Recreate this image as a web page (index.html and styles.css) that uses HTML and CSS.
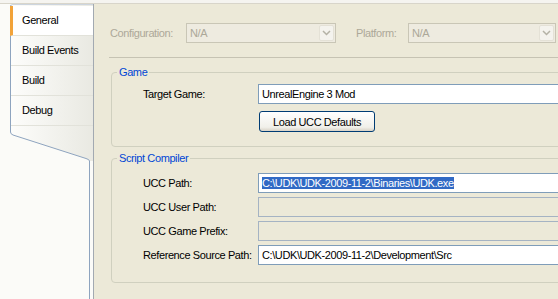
FILE: index.html
```html
<!DOCTYPE html>
<html lang="en">
<head>
    <meta charset="UTF-8">
    <title>Project Properties - General</title>
    <link rel="stylesheet" href="styles.css">
</head>
<body>
    <div class="topbar"></div>

    <div class="main">
        <nav class="sidebar">
            <ul class="tabs">
                <li class="tab active">General</li>
                <li class="tab">Build Events</li>
                <li class="tab">Build</li>
                <li class="tab">Debug</li>
            </ul>
            <svg class="tabs-tail" width="93" height="32" viewBox="0 0 93 32">
                <defs>
                    <linearGradient id="tabFade" gradientUnits="userSpaceOnUse" x1="10" y1="0" x2="93" y2="0">
                        <stop offset="0" stop-color="#fdfdfb"/>
                        <stop offset="1" stop-color="#e9e9e2"/>
                    </linearGradient>
                </defs>
                <path d="M10 0 H93 V32 H90 Q89.5 30.5 86 29.5 L13 6 Q10.5 5 10.5 3 V0 Z" fill="url(#tabFade)"/>
                <path d="M10.5 0 V3 Q10.5 5 13 6 L86 29.5 Q89.5 30.5 89.5 32" fill="none" stroke="#8ea4bf" stroke-width="1"/>
            </svg>
            <div class="tabs-line"></div>
        </nav>

        <main class="panel">
            <div class="config-row">
                <span class="dim cfg-label">Configuration:</span>
                <div class="combo">
                    <span class="combo-text">N/A</span>
                    <span class="combo-drop">
                        <svg width="9" height="6" viewBox="0 0 9 6"><path d="M1 1 L4.5 4.5 L8 1" fill="none" stroke="#b4b2a6" stroke-width="1.5"/></svg>
                    </span>
                </div>
                <span class="dim plat-label">Platform:</span>
                <div class="combo combo-plat">
                    <span class="combo-text">N/A</span>
                    <span class="combo-drop">
                        <svg width="9" height="6" viewBox="0 0 9 6"><path d="M1 1 L4.5 4.5 L8 1" fill="none" stroke="#b4b2a6" stroke-width="1.5"/></svg>
                    </span>
                </div>
            </div>

            <hr class="sep">

            <fieldset class="group group-game">
                <legend>Game</legend>
                <div class="group-body">
                    <div class="field-row">
                        <span class="field-label">Target Game:</span>
                        <div class="textbox">UnrealEngine 3 Mod</div>
                    </div>
                    <div class="field-row">
                        <span></span>
                        <button class="btn">Load UCC Defaults</button>
                    </div>
                </div>
            </fieldset>

            <fieldset class="group group-compiler">
                <legend>Script Compiler</legend>
                <div class="group-body compiler-body">
                    <div class="field-row">
                        <span class="field-label">UCC Path:</span>
                        <div class="textbox"><span class="selected">C:\UDK\UDK-2009-11-2\Binaries\UDK.exe</span></div>
                    </div>
                    <div class="field-row">
                        <span class="field-label">UCC User Path:</span>
                        <div class="textbox disabled"></div>
                    </div>
                    <div class="field-row">
                        <span class="field-label">UCC Game Prefix:</span>
                        <div class="textbox disabled"></div>
                    </div>
                    <div class="field-row">
                        <span class="field-label">Reference Source Path:</span>
                        <div class="textbox">C:\UDK\UDK-2009-11-2\Development\Src</div>
                    </div>
                </div>
            </fieldset>
        </main>
    </div>
</body>
</html>
```

FILE: styles.css
```css
html, body {
    margin: 0;
    padding: 0;
}

body {
    width: 558px;
    height: 299px;
    overflow: hidden;
    display: flex;
    flex-direction: column;
    background-color: #fbfbf8;
    font-family: "Liberation Sans", Arial, sans-serif;
    font-size: 11px;
    letter-spacing: -0.4px;
    color: #000;
}

.topbar {
    height: 3px;
    background: #f5f4f0;
    border-bottom: 1px solid #d8d5ca;
    flex-shrink: 0;
}

.main {
    flex: 1;
    display: flex;
    min-height: 0;
}

/* left tab list */
.sidebar {
    width: 93px;
    flex-shrink: 0;
    display: flex;
    flex-direction: column;
    background: #fbfbf8;
    border-right: 1px solid #a2a9b1;
}

.tabs {
    list-style: none;
    margin: 0 0 0 10px;
    padding: 1px 0 3px 0;
    border-left: 1px solid #8ea4bf;
    border-top: 1px solid #cdd5df;
    border-top-left-radius: 3px;
    background: linear-gradient(90deg, #fdfdfb, #e9e9e2);
}

.tab {
    height: 30px;
    box-sizing: border-box;
    line-height: 29px;
    padding-left: 11px;
    border-bottom: 1px solid #e2e2da;
    cursor: default;
}

.tab.active {
    background: #fff;
    margin-left: -1px;
    padding-left: 9px;
    border-left: 3px solid #f2a33a;
}

.tabs-tail {
    display: block;
    flex-shrink: 0;
}

.tabs-line {
    flex: 1;
    width: 89px;
    border-right: 1px solid #8ea4bf;
}

/* right property panel */
.panel {
    flex: 1;
    background: #ece9d8;
    padding: 19px 0 0 16px;
    overflow: hidden;
    min-width: 0;
}

.dim {
    color: #aca899;
}

.config-row {
    display: flex;
    align-items: center;
    height: 20px;
    white-space: nowrap;
}

.cfg-label {
    width: 76px;
}

.plat-label {
    width: 52px;
    margin-left: 20px;
}

.combo {
    width: 150px;
    height: 20px;
    box-sizing: border-box;
    border: 1px solid #c9c6b6;
    background: #eeebe0;
    display: flex;
    align-items: center;
    justify-content: space-between;
    flex-shrink: 0;
}

.combo-plat {
    width: 148px;
}

.combo-text {
    color: #aca899;
    padding-left: 3px;
}

.combo-drop {
    width: 15px;
    height: 16px;
    margin-right: 1px;
    box-sizing: border-box;
    border: 1px solid #e4e1d6;
    border-radius: 2px;
    background: #f4f3ee;
    display: flex;
    align-items: center;
    justify-content: center;
}

.sep {
    height: 0;
    margin: 14px 0 0 -1px;
    border: 0;
    border-top: 1px solid #c6c3b3;
}

.group {
    margin: 8px 0 0 1px;
    padding: 0;
    width: 470px;
    border: 1px solid #d0d0bf;
    border-radius: 4px;
    min-width: 0;
}

.group legend {
    margin-left: 5px;
    padding: 0 2px;
    line-height: 13px;
    color: #0046d5;
}

.group-compiler {
    margin-top: 5px;
}

.group-body {
    padding: 5px 0 14px 31px;
    display: flex;
    flex-direction: column;
    gap: 7px;
}

.compiler-body {
    padding-top: 8px;
    padding-bottom: 17px;
    gap: 4px;
}

.field-row {
    display: grid;
    grid-template-columns: 115px 320px;
    align-items: center;
    white-space: nowrap;
}

.textbox {
    height: 20px;
    box-sizing: border-box;
    border: 1px solid #7f9db9;
    background: #fff;
    padding: 0 3px;
    line-height: 18px;
    overflow: hidden;
}

.textbox.disabled {
    background: #ece9d8;
    border-color: #a5b3c3;
}

.selected {
    background: #316ac5;
    color: #fff;
}

.btn {
    width: 116px;
    height: 21px;
    margin-left: 1px;
    padding: 0;
    border: 1px solid #003c74;
    border-radius: 3px;
    background: linear-gradient(#ffffff, #f1f0ea 80%, #d8d2c6);
    font-family: inherit;
    font-size: 11px;
    letter-spacing: -0.4px;
    color: #000;
}
```
